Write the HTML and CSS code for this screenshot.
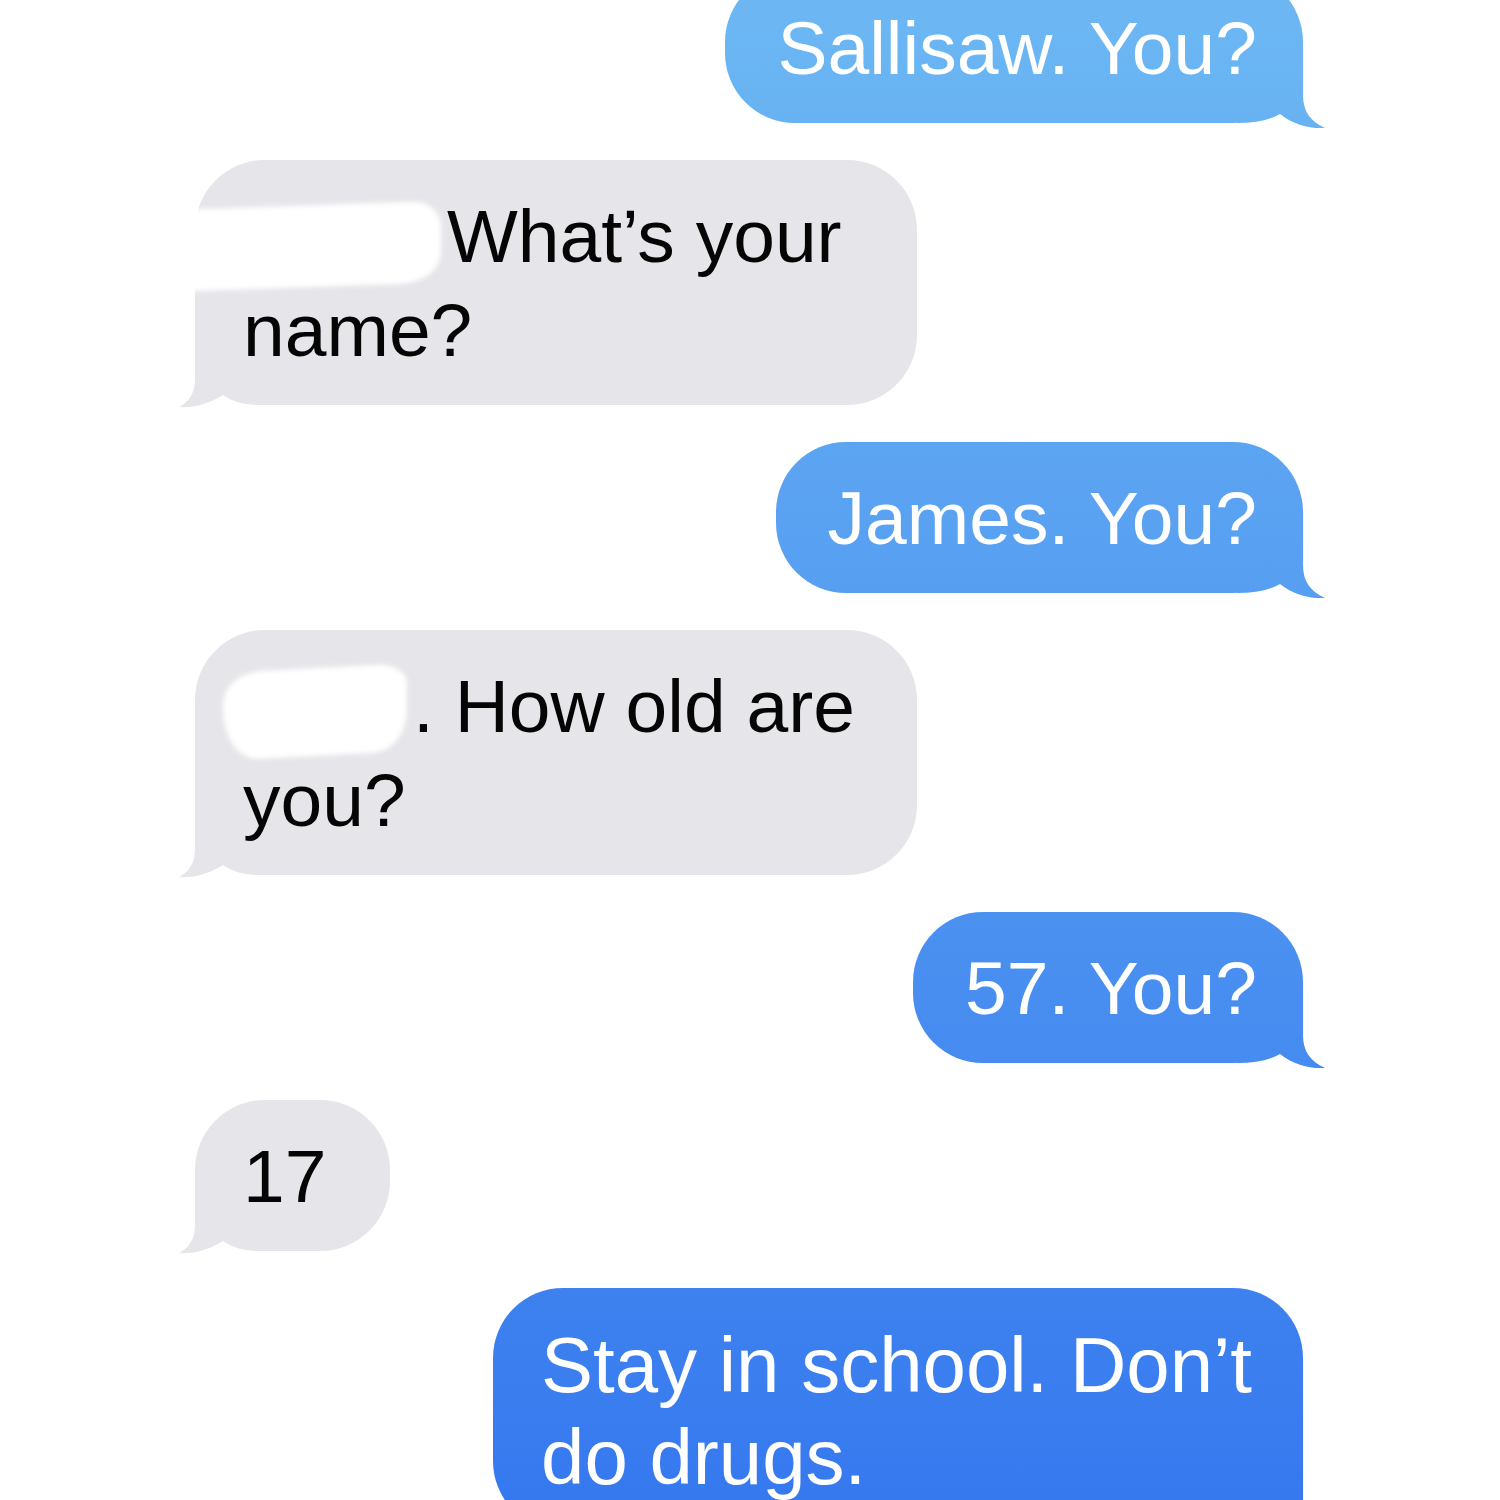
FILE: index.html
```html
<!DOCTYPE html>
<html lang="en">
<head>
<meta charset="utf-8">
<title>Messages</title>
<link rel="stylesheet" href="styles.css">
</head>
<body>
<div class="thread">
  <div class="msg out"><div class="bubble">Sallisaw. You?</div></div>
  <div class="msg in"><div class="bubble"><span class="redact r1"></span>What’s your name?</div></div>
  <div class="msg out"><div class="bubble">James. You?</div></div>
  <div class="msg in"><div class="bubble"><span class="redact r2"></span>. How old are you?</div></div>
  <div class="msg out"><div class="bubble">57. You?</div></div>
  <div class="msg in"><div class="bubble">17</div></div>
  <div class="msg out"><div class="bubble large">Stay in school. Don’t do drugs.</div></div>
</div>
</body>
</html>
```

FILE: styles.css
```css
* { box-sizing: border-box; }

html, body {
  margin: 0;
  background: #ffffff;
}

body {
  width: 1500px;
  height: 1500px;
  overflow: hidden;
}

.thread {
  display: flex;
  flex-direction: column;
  gap: 37px;
  padding: 0 197px 0 195px;
  margin-top: -28px;
}

.msg {
  display: flex;
}

.msg.out {
  justify-content: flex-end;
}

.msg.in {
  justify-content: flex-start;
}

.bubble {
  position: relative;
  isolation: isolate;
  font-family: "Liberation Sans", Arial, Helvetica, sans-serif;
  font-size: 75px;
  line-height: 94px;
  padding: 29px 46px 28px 48px;
  border-radius: 70px;
  min-width: 195px;
}

.bubble::after {
  content: "";
  position: absolute;
  z-index: -1;
  bottom: -5px;
  height: 75px;
}

.out .bubble {
  max-width: 810px;
  padding-left: 52px;
  color: #ffffff;
  background: linear-gradient(180deg, #6cb7f3 0%, #3679ef 100%) fixed;
}

.out .bubble.large {
  font-size: 78px;
  line-height: 92px;
  padding-left: 48px;
  padding-top: 31px;
}

.out .bubble::after {
  right: -22px;
  width: 87px;
  background: linear-gradient(180deg, #6cb7f3 0%, #3679ef 100%) fixed;
  clip-path: path("M0,0 L65,0 L65,42 C65,58 72,68 87,75 C72,76 56,72 42,61 C30,68 16,70 0,70 Z");
}

.in .bubble {
  max-width: 722px;
  color: #050505;
  background: #e5e5ea;
}

.in .bubble::after {
  left: -20px;
  width: 85px;
  background: #e5e5ea;
  clip-path: path("M85,0 L20,0 L20,44 C20,58 14,67 4,72 C18,73 34,69 48,60 C58,67 70,70 85,70 Z");
}

.redact {
  display: inline-block;
  position: relative;
  height: 1px;
}

.redact::before {
  content: "";
  position: absolute;
  background: #ffffff;
  filter: blur(2.5px);
}

.r1 {
  width: 204px;
}

.r1::before {
  left: -54px;
  right: 6px;
  top: -56px;
  height: 82px;
  border-radius: 6px 28px 40px 4px / 6px 26px 30px 44px;
  transform: skewY(-2deg);
}

.r2 {
  width: 170px;
}

.r2::before {
  left: -20px;
  right: 6px;
  top: -63px;
  height: 88px;
  border-radius: 40px 30px 34px 36px / 30px 20px 40px 50px;
  transform: skewY(-3deg);
}
```
